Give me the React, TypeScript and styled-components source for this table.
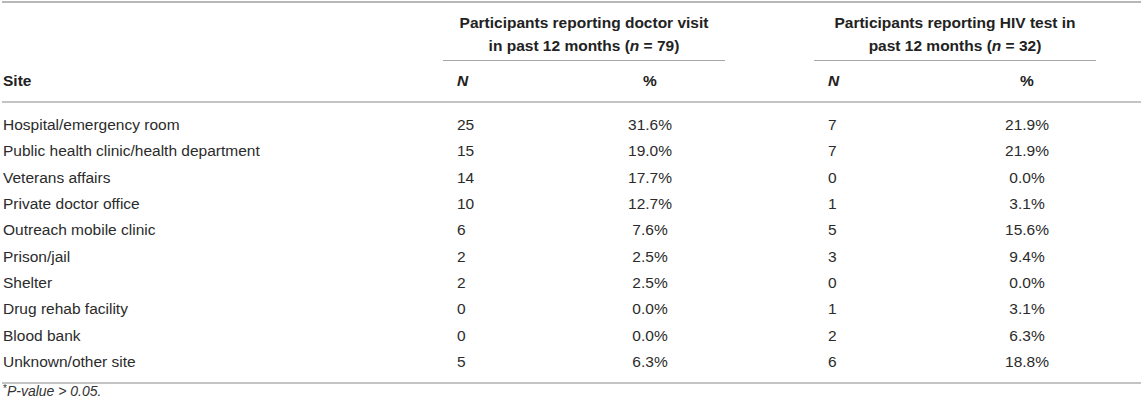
import React from "react";
import styled, { createGlobalStyle, css } from "styled-components";

const Global = createGlobalStyle`
  html, body { margin: 0; padding: 0; background: #ffffff; }
  body { font-family: "Liberation Sans", Arial, Helvetica, sans-serif; color: #2b2b2b; }
`;

const columns = css`
  display: grid;
  grid-template-columns: 441px 132px 150px 89px 132px 162px 1fr;
`;

const Wrapper = styled.div`
  width: 1139px;
  padding: 1px 2px 0 2px;
`;

const Head = styled.div`
  border-top: 2px solid #b8b8b8;
  border-bottom: 2px solid #c4c4c4;
`;

const GroupRow = styled.div`
  ${columns};
  height: 58px;
`;

const GroupCell = styled.div<{ $start: number }>`
  grid-column: ${(p) => p.$start} / span 2;
  justify-self: start;
  width: 282px;
  border-bottom: 1px solid #a8a8a8;
  padding-top: 8px;
  text-align: center;
  font-weight: 700;
  font-size: 15.5px;
  line-height: 23px;
  color: #222;
  white-space: nowrap;
`;

const HeadRow = styled.div`
  ${columns};
  height: 40px;
  align-items: center;
  font-weight: 700;
  font-size: 15.5px;
  color: #222;
`;

const HeadCell = styled.div<{ $align?: "left" | "center"; $pad?: number; $italic?: boolean }>`
  text-align: ${(p) => p.$align ?? "left"};
  padding-left: ${(p) => p.$pad ?? 0}px;
  font-style: ${(p) => (p.$italic ? "italic" : "normal")};
`;

const Body = styled.div`
  padding: 9px 0 7px 0;
  border-bottom: 2px solid #c4c4c4;
`;

const Row = styled.div`
  ${columns};
  height: 26.3px;
  align-items: center;
  font-size: 15.5px;
  color: #2b2b2b;
`;

const Cell = styled.div<{ $align?: "left" | "center"; $pad?: number }>`
  text-align: ${(p) => p.$align ?? "left"};
  padding-left: ${(p) => p.$pad ?? 0}px;
  white-space: nowrap;
`;

const Footnote = styled.div`
  font-size: 14px;
  line-height: 15px;
  color: #333;
  padding-left: 1px;
  font-style: italic;
`;

const Star = styled.sup`
  font-style: normal;
  font-size: 10px;
  vertical-align: 4px;
  line-height: 0;
`;

const rows: [string, string, string, string, string][] = [
  ["Hospital/emergency room", "25", "31.6%", "7", "21.9%"],
  ["Public health clinic/health department", "15", "19.0%", "7", "21.9%"],
  ["Veterans affairs", "14", "17.7%", "0", "0.0%"],
  ["Private doctor office", "10", "12.7%", "1", "3.1%"],
  ["Outreach mobile clinic", "6", "7.6%", "5", "15.6%"],
  ["Prison/jail", "2", "2.5%", "3", "9.4%"],
  ["Shelter", "2", "2.5%", "0", "0.0%"],
  ["Drug rehab facility", "0", "0.0%", "1", "3.1%"],
  ["Blood bank", "0", "0.0%", "2", "6.3%"],
  ["Unknown/other site", "5", "6.3%", "6", "18.8%"],
];

export default function App() {
  return (
    <>
      <Global />
      <Wrapper>
        <Head>
          <GroupRow>
            <GroupCell $start={2}>
              Participants reporting doctor visit
              <br />
              in past 12 months (<i>n</i> = 79)
            </GroupCell>
            <GroupCell $start={5}>
              Participants reporting HIV test in
              <br />
              past 12 months (<i>n</i> = 32)
            </GroupCell>
          </GroupRow>
          <HeadRow>
            <HeadCell $pad={1}>Site</HeadCell>
            <HeadCell $pad={14} $italic>N</HeadCell>
            <HeadCell $align="center">%</HeadCell>
            <div />
            <HeadCell $pad={14} $italic>N</HeadCell>
            <HeadCell $align="center">%</HeadCell>
            <div />
          </HeadRow>
        </Head>
        <Body>
          {rows.map((r) => (
            <Row key={r[0]}>
              <Cell $pad={1}>{r[0]}</Cell>
              <Cell $pad={14}>{r[1]}</Cell>
              <Cell $align="center">{r[2]}</Cell>
              <div />
              <Cell $pad={14}>{r[3]}</Cell>
              <Cell $align="center">{r[4]}</Cell>
              <div />
            </Row>
          ))}
        </Body>
        <Footnote>
          <Star>*</Star>P-value &gt; 0.05.
        </Footnote>
      </Wrapper>
    </>
  );
}
